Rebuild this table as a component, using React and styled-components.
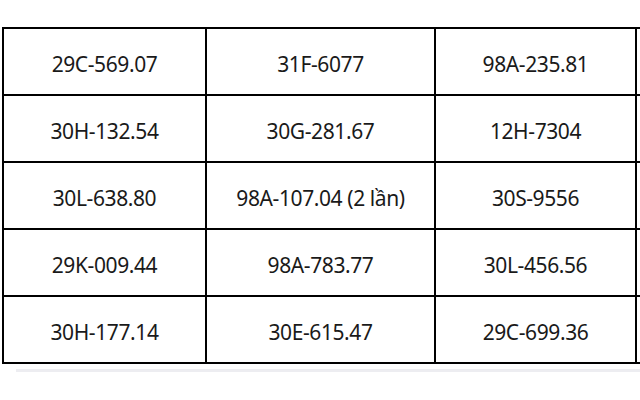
import React from "react";
import styled, { createGlobalStyle } from "styled-components";

const Global = createGlobalStyle`
  html, body {
    margin: 0;
    padding: 0;
    background: #ffffff;
  }
  body {
    font-family: "Noto Sans", "Open Sans", sans-serif;
    color: #1a1a1a;
  }
`;

const Page = styled.div`
  width: 640px;
  height: 400px;
  overflow: hidden;
  padding: 27px 0 0 2px;
  box-sizing: border-box;
`;

const Table = styled.table`
  border-collapse: collapse;
  table-layout: fixed;
  width: 832px;
`;

const Cell = styled.td`
  border: 2px solid #000;
  height: 61px;
  padding: 4px 0 0;
  text-align: center;
  vertical-align: middle;
  font-size: 21px;
  letter-spacing: -0.4px;
`;

const Track = styled.div`
  margin: 5px 0 0 14px;
  height: 3px;
  background: #ededf1;
`;

const rows = [
  ["29C-569.07", "31F-6077", "98A-235.81", ""],
  ["30H-132.54", "30G-281.67", "12H-7304", ""],
  ["30L-638.80", "98A-107.04 (2 lần)", "30S-9556", ""],
  ["29K-009.44", "98A-783.77", "30L-456.56", ""],
  ["30H-177.14", "30E-615.47", "29C-699.36", ""],
];

const widths = [203, 229, 201, 199];

export default function App() {
  return (
    <>
      <Global />
      <Page>
        <Table>
          <colgroup>
            {widths.map((w, i) => (
              <col key={i} style={{ width: w }} />
            ))}
          </colgroup>
          <tbody>
            {rows.map((r, i) => (
              <tr key={i}>
                {r.map((c, j) => (
                  <Cell key={j}>{c}</Cell>
                ))}
              </tr>
            ))}
          </tbody>
        </Table>
        <Track />
      </Page>
    </>
  );
}
